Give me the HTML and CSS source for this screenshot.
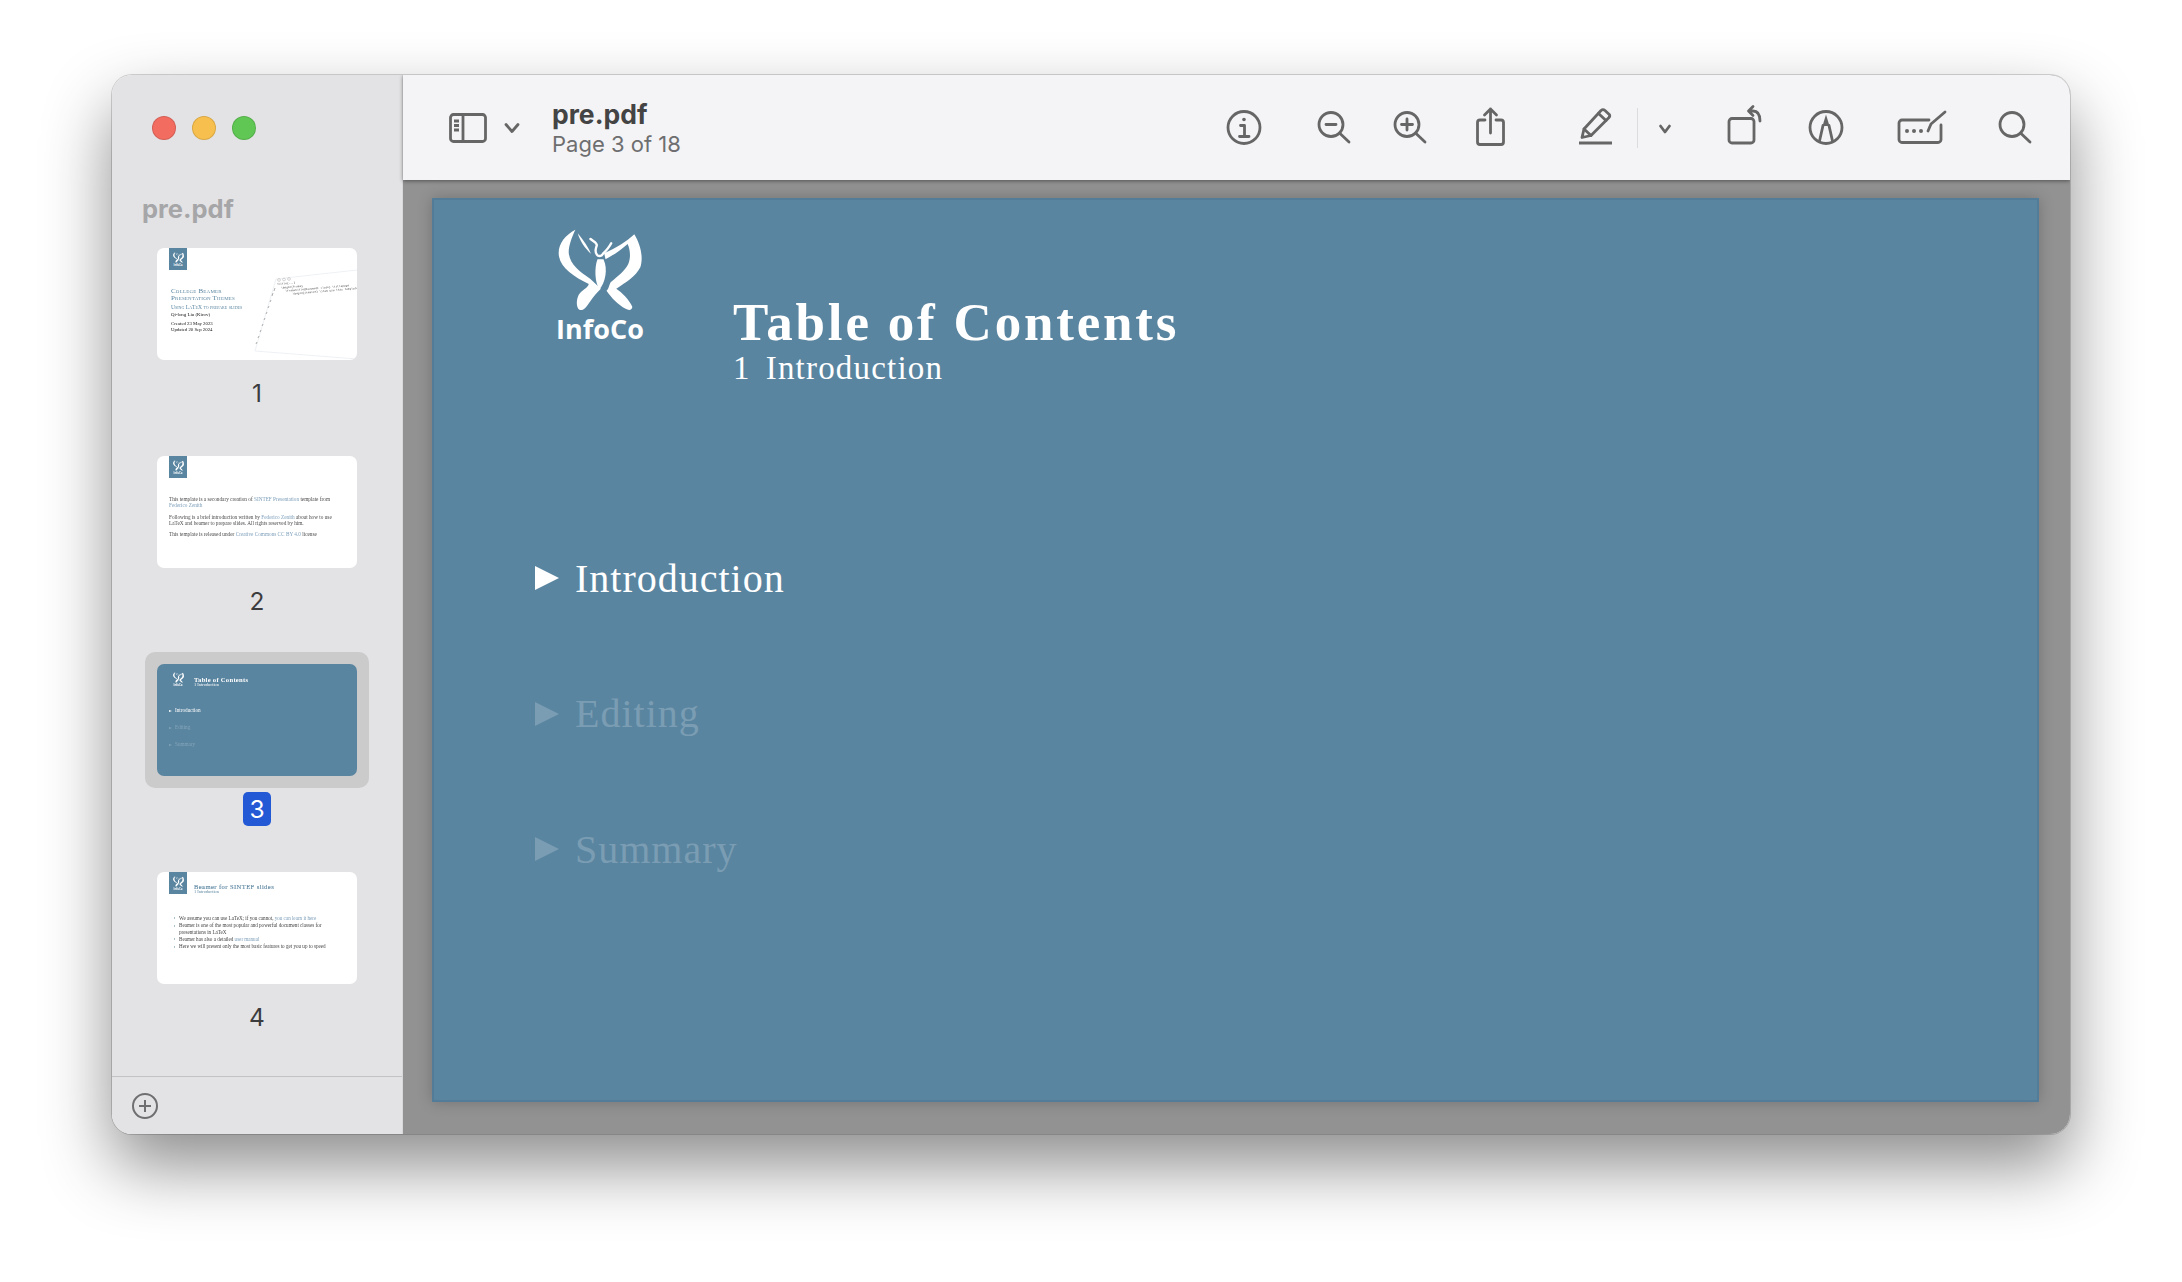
FILE: index.html
```html
<!DOCTYPE html>
<html>
<head>
<title>pre.pdf</title>
<link rel="stylesheet" href="styles.css">
</head>
<body>

<svg class="defs" width="0" height="0">
  <symbol id="butterfly" viewBox="116 56 251 244">
    <path d="M168 58C135 75 113 105 119 138C125 172 165 200 208 220C205 232 188 238 178 252C170 268 170 290 180 297C192 301 200 290 212 272C222 258 232 246 244 234L212 204C180 182 150 160 148 125C148 105 158 78 168 58Z"/>
    <path d="M175 68C192 88 207 110 215 130C196 112 182 92 175 68Z"/>
    <path d="M234 146C224 172 226 218 240 236C257 216 266 176 252 146Z"/>
    <path d="M254 128C288 112 320 94 344 71C362 100 372 140 362 170C348 198 318 216 290 234C306 244 330 268 338 288C338 298 328 300 318 294C296 282 276 262 261 240C270 232 268 218 276 212C296 196 316 180 326 160C334 140 332 118 324 100C304 118 280 134 258 146Z"/>
    <path class="butterfly-line" d="M213 85C220 92 232 95 232 104C230 112 224 122 232 132C236 138 246 138 250 130C258 122 268 112 275 98"/>
  </symbol>
</svg>

<div class="window">
  <aside class="sidebar">
    <div class="lights">
      <span class="light red"></span>
      <span class="light yellow"></span>
      <span class="light green"></span>
    </div>
    <div class="side-title">pre.pdf</div>

    <div class="thumb-list">
      <div class="thumb-item">
        <div class="thumb-frame">
          <div class="thumb thumb-white">
            <svg class="code-panel" viewBox="0 0 200 112">
              <path class="panel-edge" d="M119 31L200 22M98 103L200 111M119 31L98 103"/>
              <circle cx="122" cy="32" r="1.4"/><circle cx="127" cy="31.5" r="1.4"/><circle cx="132" cy="31" r="1.4"/>
              <g class="code-text" transform="rotate(-5 120 38)">
                <text x="120" y="37">\title{...}</text>
                <text x="124" y="41">\begin{frame}</text>
                <text x="128" y="44.5">\frametitle{Document class} \titlepage</text>
                <text x="135" y="48">\begin{itemize} \item use this template</text>
              </g>
              <path class="code-nums" d="M118 40l-1 3M116 45l-1 3M114 52l-1 2M112 58l-1 2M110 64l-1 2M108 70l-1 2M106 76l-1 2M104 82l-1 2M102 88l-1 2M100 94l-1 2"/>
            </svg>
            <div class="thumb-logo">
              <svg class="logo-mark"><use href="#butterfly"/></svg>
              <span>InfoCo</span>
            </div>
            <div class="cover">
              <div class="cover-title">College Beamer<br>Presentation Themes</div>
              <div class="cover-sub">Using LaTeX to prepare slides</div>
              <div class="cover-author">Qi-long Liu (Kirov)</div>
              <div class="cover-date">Created 23 May 2023<br>Updated 20 Sep 2024</div>
            </div>
          </div>
        </div>
        <div class="thumb-num">1</div>
      </div>

      <div class="thumb-item">
        <div class="thumb-frame">
          <div class="thumb thumb-white">
            <div class="thumb-logo">
              <svg class="logo-mark"><use href="#butterfly"/></svg>
              <span>InfoCo</span>
            </div>
            <div class="intro">
              <p>This template is a secondary creation of <b>SINTEF Presentation</b> template from <b>Federico Zenith</b></p>
              <p>Following is a brief introduction written by <b>Federico Zenith</b> about how to use LaTeX and beamer to prepare slides. All rights reserved by him.</p>
              <p>This template is released under <b>Creative Commons CC BY 4.0</b> license</p>
            </div>
          </div>
        </div>
        <div class="thumb-num">2</div>
      </div>

      <div class="thumb-item selected">
        <div class="thumb-frame">
          <div class="thumb thumb-blue">
            <div class="mini-head">
              <div class="thumb-logo">
                <svg class="logo-mark"><use href="#butterfly"/></svg>
                <span>InfoCo</span>
              </div>
              <div class="mini-titles">
                <div class="mini-title">Table of Contents</div>
                <div class="mini-sub">1 Introduction</div>
              </div>
            </div>
            <div class="mini-toc">
              <div class="mini-entry"><i></i>Introduction</div>
              <div class="mini-entry dim"><i></i>Editing</div>
              <div class="mini-entry dim"><i></i>Summary</div>
            </div>
          </div>
        </div>
        <div class="thumb-num">3</div>
      </div>

      <div class="thumb-item">
        <div class="thumb-frame">
          <div class="thumb thumb-white">
            <div class="mini-head">
              <div class="thumb-logo">
                <svg class="logo-mark"><use href="#butterfly"/></svg>
                <span>InfoCo</span>
              </div>
              <div class="mini-titles">
                <div class="mini-title">Beamer for SINTEF slides</div>
                <div class="mini-sub">1 Introduction</div>
              </div>
            </div>
            <ul class="mini-list">
              <li>We assume you can use LaTeX; if you cannot, <b>you can learn it here</b></li>
              <li>Beamer is one of the most popular and powerful document classes for presentations in LaTeX</li>
              <li>Beamer has also a detailed <b>user manual</b></li>
              <li>Here we will present only the most basic features to get you up to speed</li>
            </ul>
          </div>
        </div>
        <div class="thumb-num">4</div>
      </div>
    </div>

    <div class="side-foot">
      <svg class="add-btn" viewBox="0 0 26 26">
        <circle cx="13" cy="13" r="12"/>
        <path d="M13 7V19M7 13H19"/>
      </svg>
    </div>
  </aside>

  <main class="main">
    <header class="toolbar">
      <svg class="side-toggle" viewBox="0 0 38 30">
        <rect x="1.5" y="1.5" width="35" height="27" rx="3"/>
        <path d="M14 2V28"/>
        <path d="M5 8H10M5 12.5H10M5 17H10"/>
      </svg>
      <svg class="tool tool-caret" viewBox="0 0 44 44"><path d="M16 18.5l6 7 6-7"/></svg>
      <div class="doc-info">
        <div class="doc-name">pre.pdf</div>
        <div class="doc-page">Page 3 of 18</div>
      </div>

      <svg class="tool tool-info" viewBox="0 0 44 44">
        <circle cx="22" cy="21.5" r="16"/>
        <circle class="solid" cx="22" cy="13.5" r="1.8"/>
        <path d="M18.5 19.5H22.5V30M17.5 30.5H27"/>
      </svg>
      <svg class="tool tool-out" viewBox="0 0 44 44">
        <circle cx="22" cy="18.5" r="12"/>
        <path d="M30.5 27L40 36M17 18.5H27"/>
      </svg>
      <svg class="tool tool-in" viewBox="0 0 44 44">
        <circle cx="22" cy="18.5" r="12"/>
        <path d="M30.5 27L40 36M16.5 18.5H27.5M22 13V24"/>
      </svg>
      <svg class="tool tool-share" viewBox="0 0 44 44">
        <path d="M17 14H12a2.5 2.5 0 0 0-2.5 2.5V36a2.5 2.5 0 0 0 2.5 2.5H33a2.5 2.5 0 0 0 2.5-2.5V16.5a2.5 2.5 0 0 0-2.5-2.5H28"/>
        <path d="M22.5 27V3M16.5 9l6-6 6 6"/>
      </svg>
      <svg class="tool tool-pen" viewBox="0 0 44 44">
        <path d="M8 31.5L10 23L27 4.5Q29 2.8 31 4.5L35 8.2Q36.5 10 35 11.5L17 29.5Z"/>
        <path d="M24.5 7.5L32 14.5M10 23L17 29.5"/>
        <path class="thick" d="M5 37H38"/>
      </svg>
      <span class="tool-sep"></span>
      <svg class="tool tool-more" viewBox="0 0 44 44"><path d="M17.5 20l4.5 6 4.5-6"/></svg>
      <svg class="tool tool-rotate" viewBox="0 0 44 44">
        <rect x="10" y="12.5" width="25" height="24.5" rx="3"/>
        <path d="M30 5H34C38 5 41 8 41 15M34 0.5L29.5 5L34 9.5"/>
      </svg>
      <svg class="tool tool-markup" viewBox="0 0 44 44">
        <circle cx="22" cy="21.5" r="16"/>
        <path class="solid" d="M22 8.5L25.5 20H18.5Z"/>
        <path d="M19 19.5L15.5 35M25 19.5L28.5 35"/>
      </svg>
      <svg class="tool tool-sign" viewBox="0 0 44 44">
        <path d="M31 14H4a3 3 0 0 0-3 3V33.5a3 3 0 0 0 3 3H40a3 3 0 0 0 3-3V19"/>
        <circle class="solid" cx="9" cy="25" r="2"/><circle class="solid" cx="16" cy="25" r="2"/><circle class="solid" cx="23" cy="25" r="2"/>
        <path d="M30 25L33 18L47 6"/>
      </svg>
      <svg class="tool tool-search" viewBox="0 0 44 44">
        <circle cx="22" cy="18.5" r="12"/>
        <path d="M30.5 27L40 36"/>
      </svg>
    </header>

    <div class="stage">
      <section class="slide">
        <div class="slide-head">
          <div class="slide-logo">
            <svg class="logo-big"><use href="#butterfly"/></svg>
            <span>InfoCo</span>
          </div>
          <div class="slide-titles">
            <h1>Table of Contents</h1>
            <div class="slide-sub"><span>1</span>Introduction</div>
          </div>
        </div>
        <div class="toc">
          <div class="toc-entry"><i></i>Introduction</div>
          <div class="toc-entry dim"><i></i>Editing</div>
          <div class="toc-entry dim"><i></i>Summary</div>
        </div>
      </section>
    </div>
  </main>
</div>

</body>
</html>
```

FILE: styles.css
```css
html, body {
  margin: 0;
  height: 100%;
  background: #fff;
}

body {
  padding: 75px 0 0 112px;
  box-sizing: border-box;
  overflow: hidden;
  font-family: Inter, "Liberation Sans", sans-serif;
}

.defs {
  position: absolute;
}

.butterfly-line {
  fill: none;
  stroke: currentColor;
  stroke-width: 7;
  stroke-linecap: round;
}

.window {
  width: 1958px;
  height: 1059px;
  display: flex;
  border-radius: 20px;
  overflow: hidden;
  box-shadow: 0 0 0 1px rgba(0, 0, 0, .16), 0 32px 68px rgba(0, 0, 0, .45);
}

/* sidebar */
.sidebar {
  width: 291px;
  flex: none;
  display: flex;
  flex-direction: column;
  background: #e3e3e5;
  box-shadow: inset -1px 0 0 #d8d8da;
}

.lights {
  display: flex;
  gap: 16px;
  padding: 41px 0 0 40px;
}

.light {
  width: 24px;
  height: 24px;
  border-radius: 50%;
  box-sizing: border-box;
  border: 1px solid rgba(0, 0, 0, .12);
}
.red { background: #f26c60; }
.yellow { background: #f7bf4d; }
.green { background: #60c754; }

.side-title {
  margin: 53px 0 0 30px;
  font-size: 25.5px;
  line-height: 32px;
  font-weight: 700;
  color: #a6a6a8;
}

.thumb-list {
  margin-top: 11px;
  padding-left: 33px;
  display: flex;
  flex-direction: column;
  gap: 34px;
}

.thumb-item {
  width: 224px;
  display: flex;
  flex-direction: column;
  align-items: center;
}

.thumb-frame {
  padding: 12px;
  border-radius: 10px;
}
.selected .thumb-frame {
  background: #cbcbcc;
}

.thumb {
  width: 200px;
  height: 112px;
  position: relative;
  border-radius: 7px;
  overflow: hidden;
  font-family: "Liberation Serif", serif;
  filter: blur(.2px);
}
.thumb-white { background: #fff; color: #222; }
.thumb-blue { background: #5a85a0; color: #fff; }

.thumb-num {
  margin-top: 4px;
  min-width: 28px;
  height: 34px;
  line-height: 35px;
  text-align: center;
  font-size: 24.5px;
  color: #3c3c3e;
  border-radius: 5px;
}
.selected .thumb-num {
  background: #2459d6;
  color: #fff;
}

.thumb-logo {
  width: 18px;
  height: 22px;
  margin-left: 12px;
  background: #5a85a0;
  color: #fff;
  display: flex;
  flex-direction: column;
  align-items: center;
  font: 700 2.8px "Open Sans", sans-serif;
  flex: none;
}
.thumb-blue .thumb-logo {
  background: none;
}

.logo-mark {
  width: 11px;
  height: 11px;
  margin-top: 4px;
  fill: #fff;
  color: #fff;
}

.code-panel {
  position: absolute;
  left: 0;
  top: 0;
  width: 200px;
  height: 112px;
}
.code-panel circle { fill: none; stroke: #aaa; stroke-width: .5; }
.panel-edge { fill: none; stroke: #e6ebef; stroke-width: .7; }
.code-nums { fill: none; stroke: #999; stroke-width: .8; }
.code-text { font: 2.8px "Liberation Mono", monospace; fill: #444; }

.cover {
  position: relative;
  padding: 17.5px 0 0 14px;
}
.cover-title {
  font-size: 7px;
  line-height: 7px;
  color: #5a85a0;
  font-variant: small-caps;
  letter-spacing: .2px;
}
.cover-sub {
  margin-top: 2px;
  font-size: 5.6px;
  line-height: 6px;
  color: #5a85a0;
  font-variant: small-caps;
}
.cover-author {
  margin-top: 2.5px;
  font-size: 4.9px;
  line-height: 6px;
  color: #111;
}
.cover-date {
  margin-top: 2.5px;
  font-size: 4.8px;
  line-height: 6px;
  color: #111;
}

.intro {
  padding: 18px 12px 0 12px;
  font-size: 5.25px;
  line-height: 6px;
  color: #4a4a4a;
}
.intro p {
  margin: 0 0 5.5px;
}
.intro b, .mini-list b {
  font-weight: 400;
  color: #7fa0bb;
}

.mini-head {
  display: flex;
}
.thumb-blue .mini-head {
  padding-top: 4px;
}
.mini-titles {
  margin-left: 7px;
  padding-top: 11px;
}
.thumb-blue .mini-titles {
  padding-top: 7.5px;
}
.mini-title {
  font-size: 6.6px;
  line-height: 7px;
  font-weight: 700;
  letter-spacing: .28px;
  color: #fff;
}
.mini-sub {
  font-size: 4.4px;
  line-height: 4.5px;
  color: #fff;
}
.thumb-white .mini-title,
.thumb-white .mini-sub {
  color: #5a85a0;
}
.thumb-white .mini-title {
  letter-spacing: .4px;
  font-weight: 400;
  -webkit-text-stroke: .1px #5a85a0;
}

.mini-toc {
  padding: 18px 0 0 12px;
  display: flex;
  flex-direction: column;
  gap: 11.5px;
}
.mini-entry {
  display: flex;
  align-items: center;
  font-size: 5.2px;
  line-height: 5.5px;
}
.mini-entry i {
  width: 0;
  height: 0;
  margin-right: 3px;
  border-left: 3px solid currentColor;
  border-top: 1.5px solid transparent;
  border-bottom: 1.5px solid transparent;
}
.mini-entry.dim {
  color: #84a5ba;
}

.mini-list {
  list-style: none;
  margin: 0;
  padding: 20.5px 10px 0 22px;
  font-size: 5.1px;
  line-height: 6.3px;
  color: #444;
}
.mini-list li {
  position: relative;
  margin-bottom: 1px;
}
.mini-list li::before {
  content: "";
  position: absolute;
  left: -5px;
  top: 2.4px;
  border-left: 1.6px solid #5a85a0;
  border-top: .8px solid transparent;
  border-bottom: .8px solid transparent;
}

.side-foot {
  margin-top: auto;
  height: 57px;
  flex: none;
  display: flex;
  align-items: center;
  padding-left: 20px;
  border-top: 1px solid #c3c3c5;
  margin-right: 1px;
}
.add-btn {
  width: 26px;
  height: 26px;
  fill: none;
  stroke: #6f6f71;
  stroke-width: 2;
}

/* main area */
.main {
  flex: 1;
  display: flex;
  flex-direction: column;
  background: #929292;
}

.toolbar {
  height: 105px;
  flex: none;
  display: flex;
  align-items: center;
  padding-left: 46px;
  box-sizing: border-box;
  background: #f4f4f6;
  box-shadow: 0 1px 4px rgba(0, 0, 0, .45);
  position: relative;
}

.side-toggle {
  width: 38px;
  height: 30px;
  fill: none;
  stroke: #666;
  stroke-width: 2.8;
}

.tool {
  width: 44px;
  height: 44px;
  flex: none;
  overflow: visible;
  fill: none;
  stroke: #666;
  stroke-width: 2.8;
  stroke-linecap: round;
  stroke-linejoin: round;
}
.tool .solid {
  fill: #666;
  stroke: none;
}
.tool .thick {
  stroke-width: 3.2;
  stroke-linecap: butt;
}

.tool-caret { margin-left: 3px; }

.doc-info {
  margin-left: 18px;
  padding-top: 1px;
}
.doc-name {
  font-size: 26.5px;
  line-height: 33px;
  font-weight: 700;
  color: #444;
}
.doc-page {
  font-size: 22px;
  line-height: 27px;
  color: #6e6e70;
}

.tool-info { margin-left: auto; }
.tool-out { margin-left: 43px; }
.tool-in { margin-left: 32px; }
.tool-share { margin-left: 39px; }
.tool-pen { margin-left: 62px; }
.tool-sep {
  width: 1px;
  height: 40px;
  margin: 0 5px 0 19px;
  background: #dcdcde;
}
.tool-rotate { margin-left: 32px; }
.tool-markup { margin-left: 41px; }
.tool-sign { margin-left: 50px; }
.tool-search { margin: 0 36px 0 48px; }

.stage {
  flex: 1;
  padding: 18px 31px 32px 29px;
}

.slide {
  width: 1607px;
  height: 904px;
  box-sizing: border-box;
  background: #5a85a0;
  border: 2px solid #527c97;
  box-shadow: 0 0 14px rgba(0, 0, 0, .22);
  color: #fff;
  font-family: "Liberation Serif", serif;
}

.slide-head {
  display: flex;
  padding: 29px 0 0 117.5px;
}

.slide-logo {
  width: 97px;
  display: flex;
  flex-direction: column;
  align-items: center;
  font: 700 27px/32px "Open Sans", sans-serif;
  margin-right: 84.5px;
  flex: none;
}
.logo-big {
  width: 84px;
  height: 82px;
  fill: #fff;
  color: #fff;
  margin-bottom: 2px;
}

.slide-titles {
  padding-top: 64px;
}
.slide-titles h1 {
  margin: 0;
  font-size: 53px;
  line-height: 58px;
  font-weight: 700;
  letter-spacing: 2.8px;
}
.slide-sub {
  margin-top: -3px;
  font-size: 33px;
  line-height: 40px;
  letter-spacing: 1.2px;
}
.slide-sub span {
  margin-right: 15px;
}

.toc {
  padding: 165px 0 0 101px;
  display: flex;
  flex-direction: column;
  gap: 85.5px;
}
.toc-entry {
  height: 50px;
  display: flex;
  align-items: center;
  font-size: 40px;
  letter-spacing: 1px;
}
.toc-entry i {
  width: 0;
  height: 0;
  margin-right: 16px;
  border-left: 24px solid currentColor;
  border-top: 12px solid transparent;
  border-bottom: 12px solid transparent;
}
.toc-entry.dim {
  color: #7a9db3;
}
```
